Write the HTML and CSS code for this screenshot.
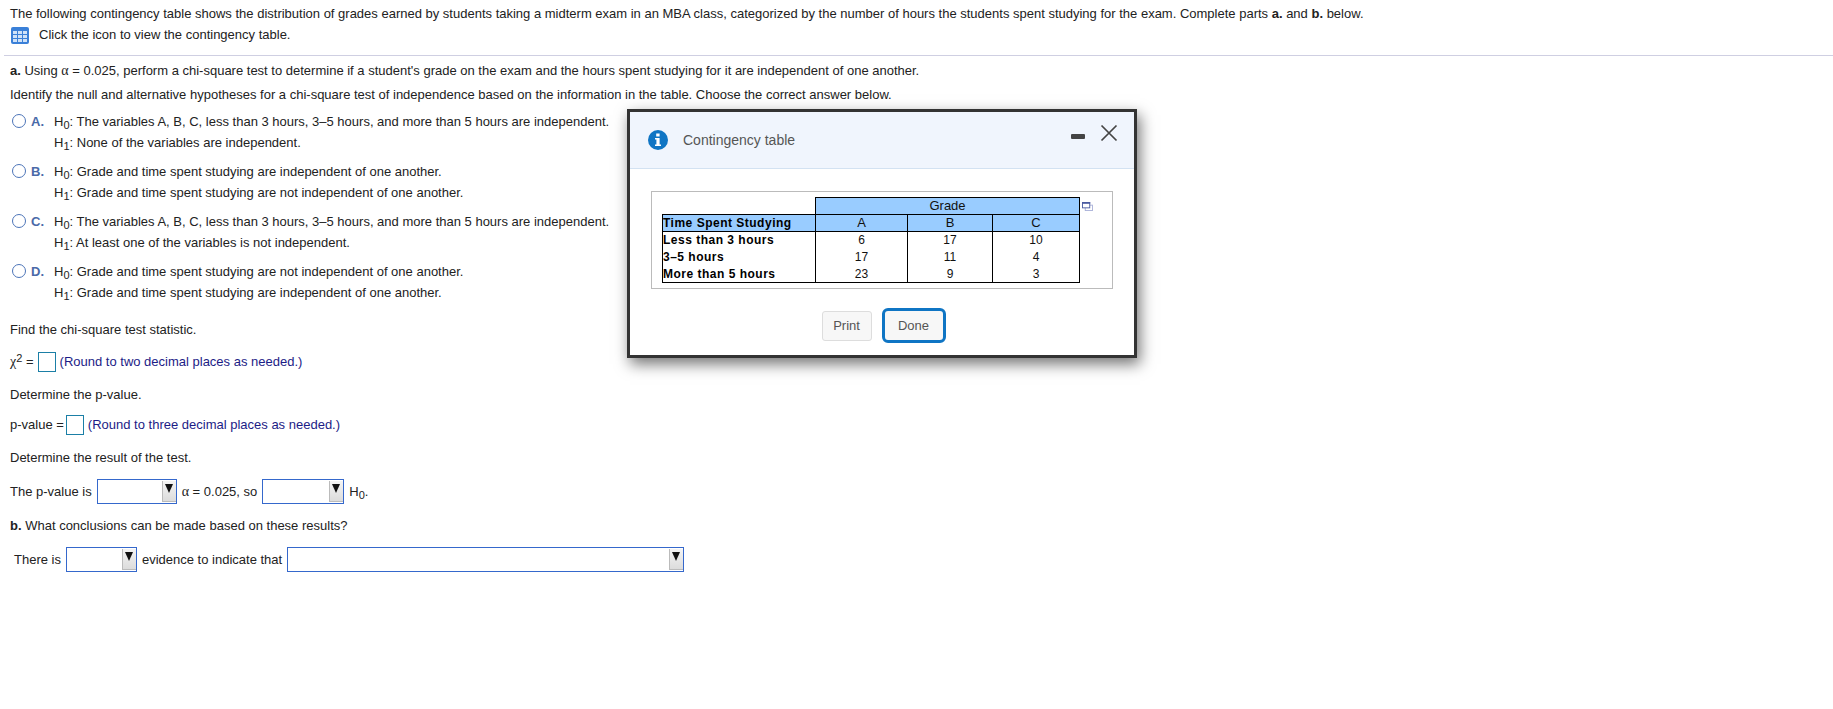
FILE: index.html
```html
<!DOCTYPE html>
<html lang="en">
<head>
<meta charset="utf-8">
<title>Contingency table question</title>
<link rel="stylesheet" href="styles.css">
</head>
<body>
<header class="intro">
  <p class="line">The following contingency table shows the distribution of grades earned by students taking a midterm exam in an MBA class, categorized by the number of hours the students spent studying for the exam. Complete parts <b>a.</b> and <b>b.</b> below.</p>
  <p class="line icon-line">
    <svg class="grid-icon" viewBox="0 0 18 17" width="18" height="17" aria-hidden="true">
      <rect width="18" height="17" rx="2" fill="#3a80d8"/>
      <g fill="#cfe2f8">
        <rect x="2" y="4" width="4" height="3"/><rect x="7" y="4" width="4" height="3"/><rect x="12" y="4" width="4" height="3"/>
        <rect x="2" y="8" width="4" height="3"/><rect x="7" y="8" width="4" height="3"/><rect x="12" y="8" width="4" height="3"/>
        <rect x="2" y="12" width="4" height="3"/><rect x="7" y="12" width="4" height="3"/><rect x="12" y="12" width="4" height="3"/>
      </g>
    </svg>
    Click the icon to view the contingency table.
  </p>
</header>

<main class="question">
  <p class="line part-a"><b>a.</b> Using <span class="greek">α</span> = 0.025, perform a chi-square test to determine if a student's grade on the exam and the hours spent studying for it are independent of one another.</p>
  <p class="line identify">Identify the null and alternative hypotheses for a chi-square test of independence based on the information in the table. Choose the correct answer below.</p>

  <div class="options">
    <div class="option">
      <span class="radio"></span><span class="letter">A.</span>
      <div class="hyp">
        <div>H<sub>0</sub>: The variables A, B, C, less than 3 hours, 3–5 hours, and more than 5 hours are independent.</div>
        <div>H<sub>1</sub>: None of the variables are independent.</div>
      </div>
    </div>
    <div class="option">
      <span class="radio"></span><span class="letter">B.</span>
      <div class="hyp">
        <div>H<sub>0</sub>: Grade and time spent studying are independent of one another.</div>
        <div>H<sub>1</sub>: Grade and time spent studying are not independent of one another.</div>
      </div>
    </div>
    <div class="option">
      <span class="radio"></span><span class="letter">C.</span>
      <div class="hyp">
        <div>H<sub>0</sub>: The variables A, B, C, less than 3 hours, 3–5 hours, and more than 5 hours are independent.</div>
        <div>H<sub>1</sub>: At least one of the variables is not independent.</div>
      </div>
    </div>
    <div class="option">
      <span class="radio"></span><span class="letter">D.</span>
      <div class="hyp">
        <div>H<sub>0</sub>: Grade and time spent studying are not independent of one another.</div>
        <div>H<sub>1</sub>: Grade and time spent studying are independent of one another.</div>
      </div>
    </div>
  </div>

  <p class="line find">Find the chi-square test statistic.</p>
  <div class="line answer chi">
    <span><span class="greek">χ</span><sup>2</sup> =</span><span class="input chi-input"></span><span class="hint">(Round to two decimal places as needed.)</span>
  </div>
  <p class="line det-p">Determine the p-value.</p>
  <div class="line answer pval">
    <span>p-value =</span><span class="input p-input"></span><span class="hint">(Round to three decimal places as needed.)</span>
  </div>
  <p class="line det-r">Determine the result of the test.</p>
  <div class="line answer result">
    <span>The p-value is</span>
    <span class="select sel-a"><i class="arrow"></i></span>
    <span><span class="greek">α</span> = 0.025, so</span>
    <span class="select sel-b"><i class="arrow"></i></span>
    <span>H<sub>0</sub>.</span>
  </div>
  <p class="line part-b"><b>b.</b> What conclusions can be made based on these results?</p>
  <div class="line answer conclusion">
    <span>There is</span>
    <span class="select sel-c"><i class="arrow"></i></span>
    <span>evidence to indicate that</span>
    <span class="select sel-d"><i class="arrow"></i></span>
  </div>
</main>

<section class="modal">
  <div class="modal-head">
    <svg class="info" viewBox="0 0 20 20" width="20" height="20" aria-hidden="true">
      <circle cx="10" cy="10" r="10" fill="#0f75c4"/>
      <rect x="8.2" y="3.5" width="3.4" height="3" fill="#fff"/>
      <path d="M7 8h4.6v6.5H13V16H7v-1.500h1.400V9.500H7z" fill="#fff"/>
    </svg>
    <span class="modal-title">Contingency table</span>
    <span class="minimize"></span>
    <svg class="close" viewBox="0 0 18 18" width="18" height="18" aria-hidden="true">
      <path d="M1.500 1.500l15 15M16.500 1.500l-15 15" stroke="#444" stroke-width="1.700" fill="none"/>
    </svg>
  </div>
  <div class="modal-body">
    <div class="frame">
      <table class="grades">
        <colgroup>
          <col class="col-label"><col class="col-a"><col class="col-b"><col class="col-c">
        </colgroup>
        <tr class="head">
          <td class="blank"></td>
          <th colspan="3">Grade</th>
        </tr>
        <tr class="head">
          <th class="row-h">Time Spent Studying</th>
          <th>A</th><th>B</th><th>C</th>
        </tr>
        <tr><td class="row-h">Less than 3 hours</td><td>6</td><td>17</td><td>10</td></tr>
        <tr><td class="row-h">3–5 hours</td><td>17</td><td>11</td><td>4</td></tr>
        <tr><td class="row-h">More than 5 hours</td><td>23</td><td>9</td><td>3</td></tr>
      </table>
      <svg class="popout" viewBox="0 0 12 10" width="11" height="9" aria-hidden="true">
        <rect x="3.500" y="3.500" width="8" height="6" fill="#fff" stroke="#a8b0d8"/>
        <rect x="0.500" y="0.500" width="8" height="6" fill="#fff" stroke="#4a5aa0"/>
        <rect x="0" y="0" width="9" height="2" fill="#4a5aa0"/>
      </svg>
    </div>
    <div class="actions">
      <button class="btn" type="button">Print</button>
      <button class="btn primary" type="button">Done</button>
    </div>
  </div>
</section>
</body>
</html>
```

FILE: styles.css
```css
* { box-sizing: border-box; }

html, body { margin: 0; padding: 0; }

body {
  position: relative;
  height: 709px;
  overflow: hidden;
  background: #fff;
  color: #222;
  font: 13px/20px "Liberation Sans", Arial, sans-serif;
}

p { margin: 0; }

sub {
  font-size: 11px;
  line-height: 0;
  vertical-align: -3px;
}

sup {
  font-size: 11px;
  line-height: 0;
  vertical-align: 4px;
}

.line { min-height: 20px; }

.intro {
  height: 56px;
  margin-left: 4px;
  padding: 4px 0 0 6px;
  border-bottom: 1px solid #cfcfe2;
}

.icon-line {
  display: flex;
  align-items: center;
  gap: 10px;
  margin-top: 1px;
}

.grid-icon { margin-left: 1px; }

.question { padding: 0 0 0 10px; }

.greek { font-family: "Liberation Serif", "DejaVu Serif", serif; font-size: 14px; }

.part-a { margin-top: 5px; }
.identify { margin-top: 4px; }

.options {
  display: flex;
  flex-direction: column;
  gap: 8px;
  margin-top: 6px;
}

.option {
  display: flex;
  align-items: flex-start;
  line-height: 21px;
}

.radio {
  flex: none;
  width: 14px;
  height: 14px;
  margin: 3px 5px 0 2px;
  border: 1.500px solid #4c74b8;
  border-radius: 50%;
}

.letter {
  flex: none;
  width: 23px;
  font-weight: bold;
  color: #4a6aa8;
}

.find { margin-top: 17px; }

.answer {
  display: flex;
  align-items: center;
  gap: 5px;
}

.chi { margin-top: 12px; }
.det-p { margin-top: 13px; }
.pval { margin-top: 10px; }
.det-r { margin-top: 13px; }
.result { margin-top: 11px; }
.part-b { margin-top: 12px; }
.conclusion { margin-top: 11px; padding-left: 4px; }

.input {
  display: block;
  height: 20px;
  border: 1px solid #1b7fa6;
  background: #fff;
}

.chi-input { width: 18px; margin-left: -1px; }
.p-input { width: 18px; margin-left: -3px; }

.hint { color: #1c1c86; margin-left: -1px; }

.select {
  display: block;
  position: relative;
  height: 25px;
  border: 1px solid #3568cc;
  background: #fff;
}

.sel-a { width: 80px; }
.sel-b { width: 82px; }
.sel-c { width: 71px; }
.sel-d { width: 397px; }

.arrow {
  position: absolute;
  top: 1px;
  right: 0;
  width: 14px;
  height: 21px;
  background: linear-gradient(#f4f4f4, #dcdcdc);
  border-left: 1px solid #bbb;
  border-bottom: 1px solid #bbb;
}

.arrow::after {
  content: "";
  position: absolute;
  top: 3px;
  left: 2px;
  border-left: 4.500px solid transparent;
  border-right: 4.500px solid transparent;
  border-top: 9px solid #111;
}

.modal {
  position: absolute;
  left: 627px;
  top: 109px;
  width: 510px;
  height: 249px;
  background: #fff;
  border: 3px solid #333;
  box-shadow: 3px 6px 14px rgba(0, 0, 0, .55);
}

.modal-head {
  display: flex;
  align-items: center;
  height: 57px;
  padding: 0 16px 0 18px;
  background: #f0f5fd;
  border-bottom: 1px solid #d3e2f2;
}

.info { flex: none; }

.modal-title {
  margin-left: 15px;
  font-size: 14px;
  color: #555;
}

.minimize {
  width: 14px;
  height: 5px;
  margin: -7px 0 0 auto;
  background: #444;
  border-radius: 1px;
}

.close { margin: -14px 0 0 15px; }

.modal-body { padding: 22px 21px 0; }

.frame {
  display: flex;
  align-items: flex-start;
  gap: 2px;
  height: 98px;
  padding: 5px 0 0 10px;
  border: 1px solid #bbb;
}

.grades {
  border-collapse: collapse;
  width: 417px;
  table-layout: fixed;
  font-size: 12px;
  line-height: 16px;
  color: #111;
}

.col-label { width: 153px; }
.col-a { width: 92px; }
.col-b { width: 85px; }
.col-c { width: 87px; }

.grades td, .grades th {
  height: 17px;
  padding: 0;
  text-align: center;
  font-weight: normal;
  border-left: 1px solid #000;
  border-right: 1px solid #000;
}

.grades tr:last-child td { border-bottom: 1px solid #000; }

.grades .row-h {
  padding-left: 0;
  text-align: left;
  font-weight: bold;
  letter-spacing: .5px;
  color: #000;
}

.grades .head th {
  height: 17px;
  font-size: 13px;
  background: #9cf;
  border-top: 1px solid #000;
  border-bottom: 1px solid #000;
}

.grades .head th.row-h {
  font-size: 12px;
  font-weight: bold;
}

.grades .blank { border: 0; border-right: 1px solid #000; }

.popout { margin-top: 5px; }

.actions {
  display: flex;
  justify-content: center;
  align-items: center;
  gap: 10px;
  margin-top: 19px;
  padding-left: 3px;
}

.btn {
  height: 30px;
  width: 50px;
  padding: 0;
  font: 13px "Liberation Sans", Arial, sans-serif;
  color: #555;
  background: #f7f7f7;
  border: 1px solid #ddd;
  border-radius: 3px;
}

.primary {
  width: 64px;
  height: 35px;
  border: 3px solid #0f75c4;
  border-radius: 6px;
}
```
